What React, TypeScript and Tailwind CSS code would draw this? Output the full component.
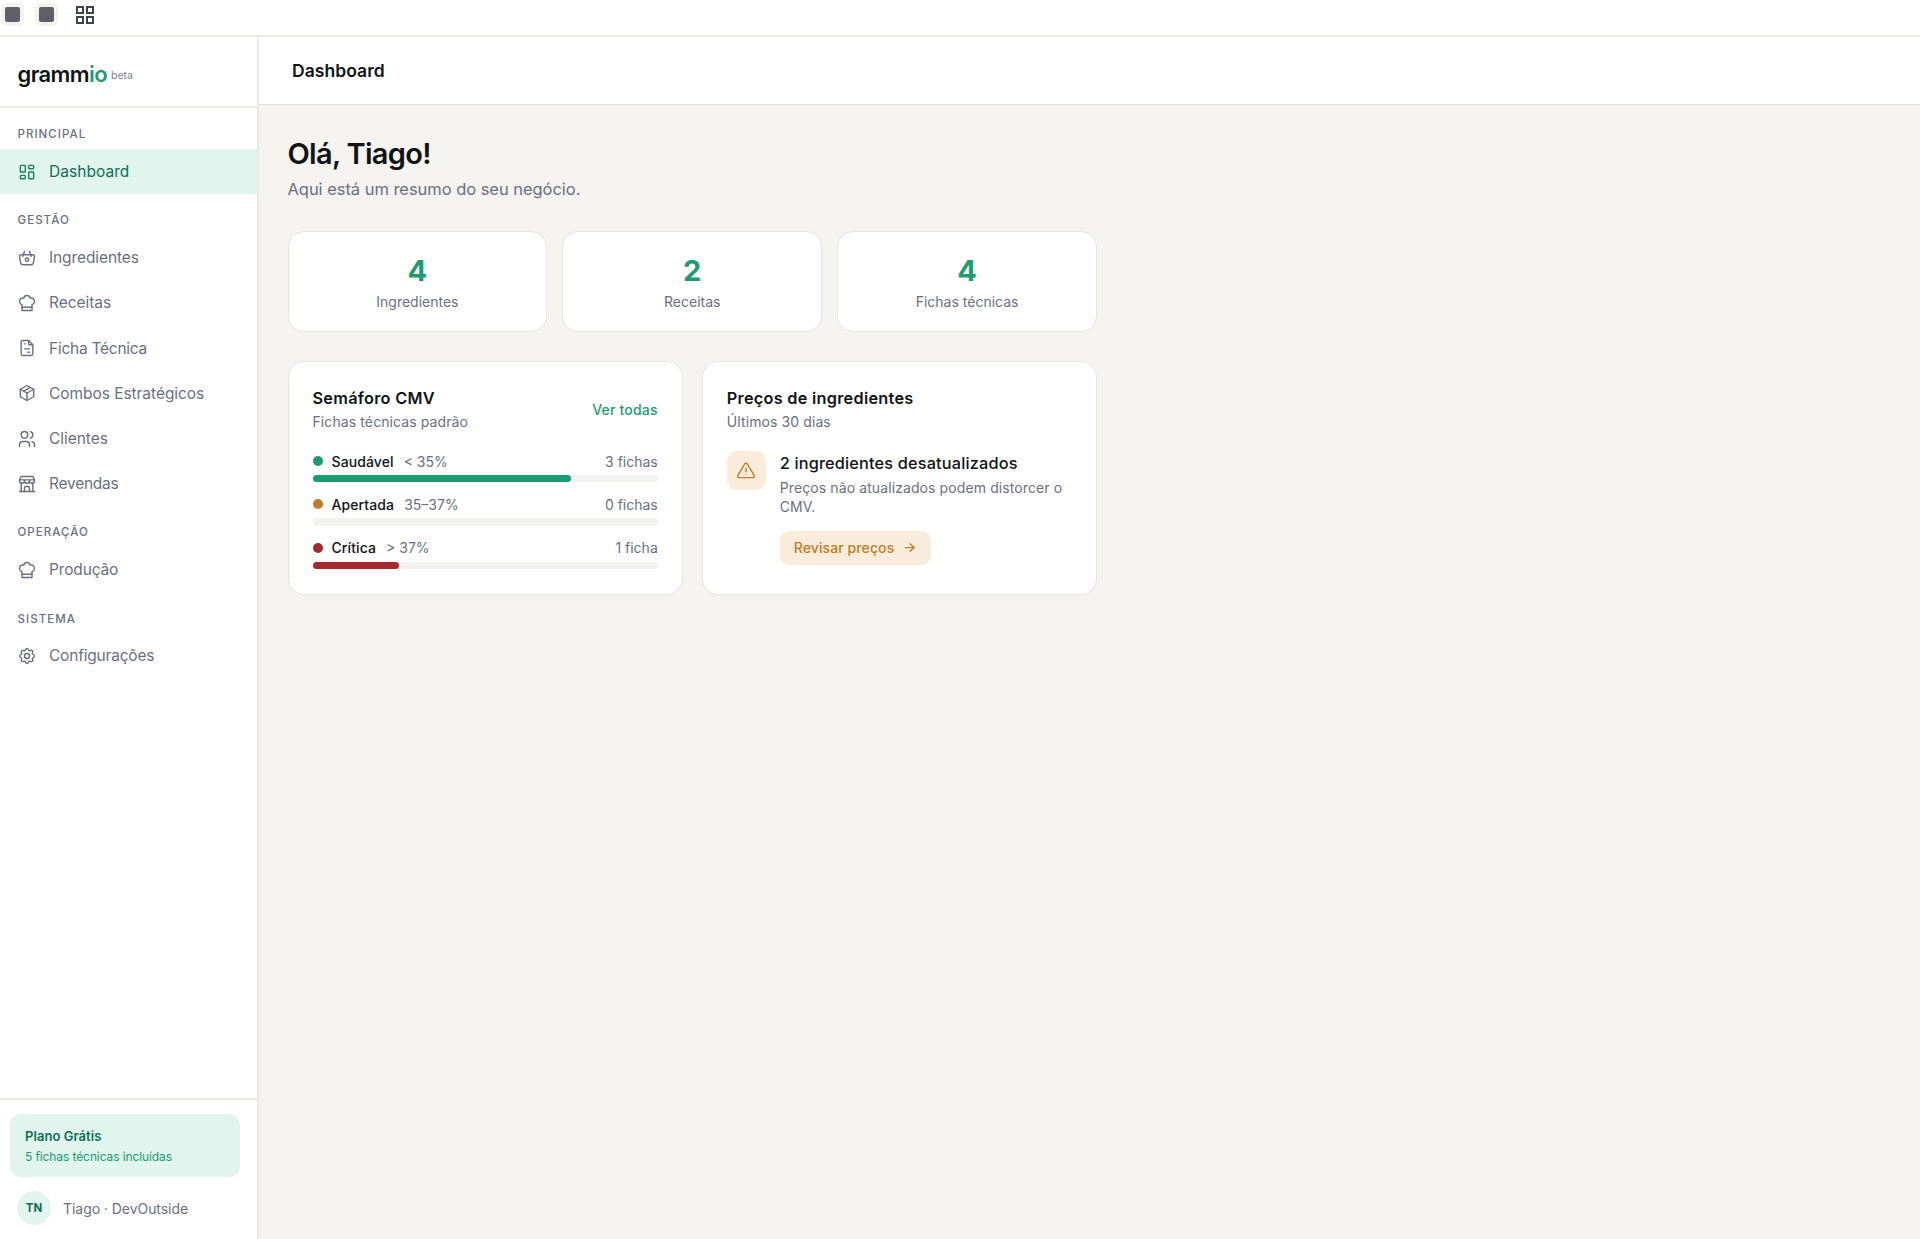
import * as React from "react";
import {
  TbAlertTriangle,
  TbArrowRight,
  TbBasket,
  TbBuildingStore,
  TbChefHat,
  TbFileInvoice,
  TbLayoutDashboard,
  TbPackage,
  TbSettings,
  TbUsers,
} from "react-icons/tb";
import type { IconType } from "react-icons";

type NavItem = { label: string; icon: IconType; active?: boolean; text: string };
type NavSection = { title: string; items: NavItem[] };

const sections: NavSection[] = [
  {
    title: "Principal",
    items: [
      { label: "Dashboard", icon: TbLayoutDashboard, active: true, text: "tracking-[0.05px]" },
    ],
  },
  {
    title: "Gestão",
    items: [
      { label: "Ingredientes", icon: TbBasket, text: "tracking-[-0.1px]" },
      { label: "Receitas", icon: TbChefHat, text: "tracking-[-0.05px]" },
      { label: "Ficha Técnica", icon: TbFileInvoice, text: "tracking-[-0.25px]" },
      { label: "Combos Estratégicos", icon: TbPackage, text: "tracking-[-0.05px]" },
      { label: "Clientes", icon: TbUsers, text: "tracking-[-0.05px]" },
      { label: "Revendas", icon: TbBuildingStore, text: "tracking-[-0.25px]" },
    ],
  },
  {
    title: "Operação",
    items: [{ label: "Produção", icon: TbChefHat, text: "tracking-[-0.15px]" }],
  },
  {
    title: "Sistema",
    items: [{ label: "Configurações", icon: TbSettings, text: "tracking-[-0.2px]" }],
  },
];

const stats = [
  { value: 4, label: "Ingredientes" },
  { value: 2, label: "Receitas" },
  { value: 4, label: "Fichas técnicas" },
];

const levels = [
  { name: "Saudável", range: "< 35%", count: "3 fichas", pct: 75, color: "bg-[#1d9b71]" },
  { name: "Apertada", range: "35–37%", count: "0 fichas", pct: 0, color: "bg-[#c07d27]" },
  { name: "Crítica", range: "> 37%", count: "1 ficha", pct: 25, color: "bg-[#a42a2c]" },
];

function TopStrip() {
  return (
    <div className="flex h-[37px] shrink-0 border-b-2 border-[#ebebe6] bg-white pt-[3px] pl-px">
      <div className="flex size-[23px] items-center justify-center rounded-md bg-[#f3f2ee]">
        <div className="size-[15px] rounded-[2px] bg-[#5e6066]" />
      </div>
      <div className="ml-[11px] flex size-[23px] items-center justify-center rounded-md bg-[#f3f2ee]">
        <div className="size-[15px] rounded-[2px] bg-[#5e6066]" />
      </div>
      <svg className="mt-[3px] ml-[18px] size-[18px]" viewBox="0 0 18 18" fill="none" stroke="#3c444a" strokeWidth="2">
        <rect x="1" y="1" width="6" height="6" />
        <rect x="11" y="1" width="6" height="6" />
        <rect x="1" y="11" width="6" height="6" />
        <rect x="11" y="11" width="6" height="6" />
      </svg>
    </div>
  );
}

function Sidebar() {
  const navItem = (item: NavItem) => {
    const Icon = item.icon;
    return (
      <a
        key={item.label}
        className={
          "flex h-[45.2px] items-center gap-3 pl-[17px] text-[15.5px] " +
          item.text +
          " " +
          (item.active ? "bg-[#e1f5ee] text-[#0f6e51]" : "text-[#6b7080]")
        }
      >
        <Icon
          className={"size-5 [stroke-width:1.7] " + (item.active ? "text-[#1a7f5f]" : "")}
        />
        {item.label}
      </a>
    );
  };

  return (
    <aside className="flex w-[259px] shrink-0 flex-col border-r-2 border-[#e9e9e8] bg-white">
      <div className="flex h-[71px] shrink-0 items-start border-b-2 border-[#ebebe8] pt-[22px] pl-[17.5px]">
        <span className="text-[22px] leading-[30px] font-semibold tracking-[-0.6px] text-[#111416]">
          gramm<span className="text-[#1d9b71]">io</span>
        </span>
        <span className="mt-[2px] ml-1 text-[10.5px] leading-[30px] text-[#7b7f8c]">beta</span>
      </div>

      <nav className="flex-1">
        {sections.map((section) => (
          <div key={section.title}>
            <div className="flex h-[41px] items-end pb-[9px] pl-[17.5px] text-[11.5px] leading-[12px] font-medium tracking-[1.05px] text-[#6b7080] uppercase">
              {section.title}
            </div>
            {section.items.map(navItem)}
          </div>
        ))}
      </nav>

      <div className="h-[141.5px] shrink-0 border-t-2 border-[#e9e9e5] pt-[14px] pl-[10px]">
        <div className="h-[63.5px] w-[230px] rounded-[10px] bg-[#e1f5ee] px-[15px] pt-[13px]">
          <div className="text-[13px] leading-[18px] font-semibold tracking-[0.05px] text-[#0f6e51]">Plano Grátis</div>
          <div className="mt-[3px] text-[12px] leading-[17px] tracking-[-0.1px] text-[#1d9b71]">
            5 fichas técnicas incluídas
          </div>
        </div>
        <div className="mt-[14px] flex items-center gap-[12px] pl-[7px]">
          <div className="flex size-[34px] items-center justify-center rounded-full bg-[#e1f5ee] pt-px text-[11.5px] font-bold text-[#0f6e51]">
            TN
          </div>
          <span className="text-[14px] tracking-[-0.05px] text-[#6b7080]">Tiago · DevOutside</span>
        </div>
      </div>
    </aside>
  );
}

function CardTitle({ title, subtitle }: { title: string; subtitle: string }) {
  return (
    <div>
      <h2 className="text-[16.3px] leading-6 font-semibold tracking-[0.27px] text-[#111416]">{title}</h2>
      <p className="text-[14px] leading-[24px] tracking-[0.1px] text-[#6b7080]">{subtitle}</p>
    </div>
  );
}

function CmvCard() {
  return (
    <section className="h-[234px] rounded-2xl border-[1.5px] border-[#e6e5e0] bg-white px-6 pt-6">
      <div className="flex items-center justify-between">
        <CardTitle title="Semáforo CMV" subtitle="Fichas técnicas padrão" />
        <span className="mb-[2px] text-[14px] font-medium tracking-[0.2px] text-[#1d9b71]">Ver todas</span>
      </div>
      <div className="mt-4 flex flex-col gap-[11px]">
        {levels.map((level) => (
          <div key={level.name}>
            <div className="flex h-[22px] items-center text-[14px]">
              <span className={"mr-[9px] size-[10px] rounded-full " + level.color} />
              <span className="font-medium tracking-[0.1px] text-[#111416]">{level.name}</span>
              <span className="ml-[10px] text-[#6b7080]">{level.range}</span>
              <span className="ml-auto text-[#6b7080]">{level.count}</span>
            </div>
            <div className="mt-[3px] h-[7.4px] rounded-full bg-[#f3f2ef]">
              <div className={"h-full rounded-full " + level.color} style={{ width: `${level.pct}%` }} />
            </div>
          </div>
        ))}
      </div>
    </section>
  );
}

function PricesCard() {
  return (
    <section className="h-[234px] rounded-2xl border-[1.5px] border-[#e6e5e0] bg-white px-6 pt-6">
      <CardTitle title="Preços de ingredientes" subtitle="Últimos 30 dias" />
      <div className="mt-[17px] flex gap-[14px]">
        <div className="flex size-[39px] shrink-0 items-center justify-center rounded-[10px] bg-[#faecda] text-[#c07d27]">
          <TbAlertTriangle className="size-5 [stroke-width:1.7]" />
        </div>
        <div>
          <p className="text-[16.3px] leading-6 font-medium tracking-[0.17px] text-[#111416]">
            2 ingredientes desatualizados
          </p>
          <p className="mt-[3px] text-[14px] leading-[19px] tracking-[0.1px] text-[#6b7080]">
            Preços não atualizados podem distorcer o<br />
            CMV.
          </p>
          <button className="mt-[15px] flex h-[33.5px] w-[151px] items-center justify-between rounded-[9px] bg-[#faecda] px-[14px] text-[14px] font-medium tracking-[0.1px] text-[#c07d27]">
            Revisar preços
            <TbArrowRight className="size-[15px]" />
          </button>
        </div>
      </div>
    </section>
  );
}

export default function App() {
  return (
    <div className="flex h-screen w-full flex-col overflow-hidden bg-white font-['Inter',sans-serif]">
      <TopStrip />
      <div className="flex min-h-0 flex-1">
        <Sidebar />
        <main className="flex min-w-0 flex-1 flex-col bg-[#f4f3ef]">
          <header className="flex h-[68px] shrink-0 items-center border-b border-[#e2e2de] bg-white pt-px pl-[33px] text-[17.5px] font-semibold tracking-[0.05px] text-[#111416]">
            Dashboard
          </header>
          <div className="w-[838px] pt-[28px] pl-[28.5px]">
            <h1 className="text-[29px] leading-[41px] font-semibold tracking-[-0.7px] text-[#111416]">
              Olá, Tiago!
            </h1>
            <p className="mt-[3px] text-[16.5px] leading-[25px] tracking-[-0.04px] text-[#6b7080]">
              Aqui está um resumo do seu negócio.
            </p>
            <div className="mt-[29px] grid grid-cols-3 gap-[15px]">
              {stats.map((stat) => (
                <div
                  key={stat.label}
                  className="flex h-[101px] flex-col items-center rounded-2xl border-[1.5px] border-[#e6e5e0] bg-white pt-[20px]"
                >
                  <div className="text-[29px] leading-[37px] font-bold text-[#1d9b71]">{stat.value}</div>
                  <div className="mt-[2px] text-[14px] leading-[22px] text-[#6b7080]">{stat.label}</div>
                </div>
              ))}
            </div>
            <div className="mt-[29px] grid grid-cols-2 gap-[19px]">
              <CmvCard />
              <PricesCard />
            </div>
          </div>
        </main>
      </div>
    </div>
  );
}
